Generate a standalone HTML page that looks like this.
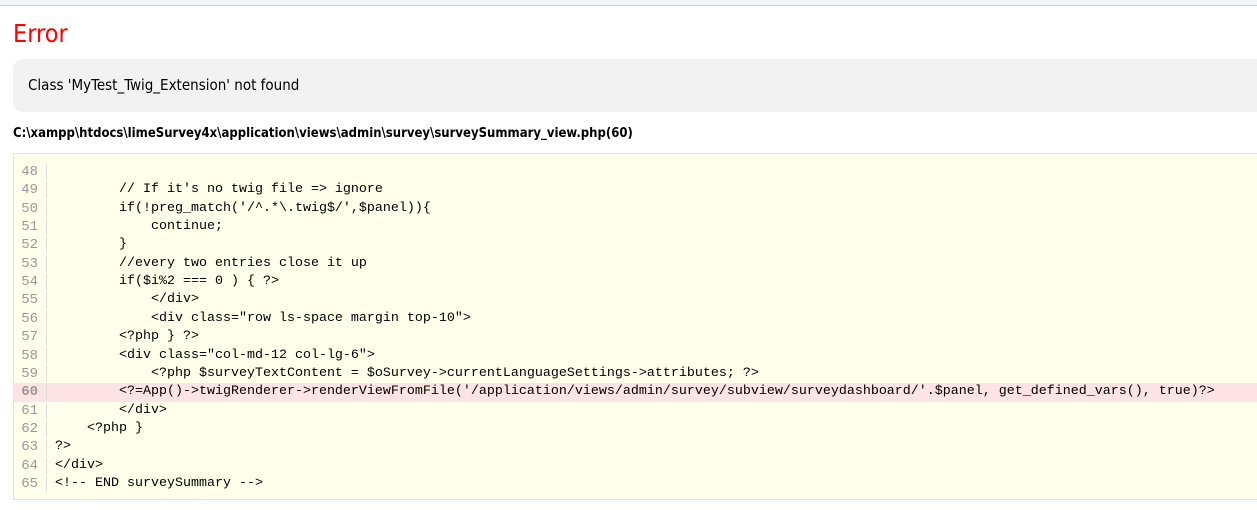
<!DOCTYPE html>
<html><head><meta charset="utf-8"><style>
html,body{margin:0;padding:0;background:#fff;width:1257px;height:510px;overflow:hidden;font-family:"DejaVu Sans","Liberation Sans",sans-serif;}
.top{position:absolute;left:0;top:0;width:1257px;height:5px;background:#f3f4f6;border-bottom:1px solid #ccc;}
h1{position:absolute;left:13px;top:19px;margin:0;font-weight:normal;color:#f00;font-size:25px;line-height:30px;font-family:"DejaVu Sans Condensed","DejaVu Sans",sans-serif;}
.msg{position:absolute;left:13px;top:59px;width:1260px;height:53px;background:#f2f2f2;border-radius:10px;}
.msg span{position:absolute;left:15px;top:17px;font-size:15px;color:#000;font-family:"DejaVu Sans Condensed","DejaVu Sans",sans-serif;}
.path{position:absolute;left:13px;top:126px;font-size:13px;font-weight:bold;color:#000;font-family:"DejaVu Sans Condensed","DejaVu Sans",sans-serif;}
.code{position:absolute;left:13px;top:153px;width:1260px;height:345px;background:#ffffec;border:1px solid #e4e4e4;}
.ln{position:absolute;left:0;height:18.35px;width:1260px;font-family:"Liberation Mono",monospace;font-size:13.33px;line-height:18.35px;white-space:pre;color:#000;}
.ln .n{position:absolute;left:0;width:24px;text-align:right;color:#999;font-size:14px;}
.ln .s{position:absolute;left:32px;top:1px;height:16px;border-left:1px solid #ddd;}
.ln .t{position:absolute;left:41px;}
.hl{background:#fde3e3;}
.hl .n{font-weight:bold;}
</style></head><body>
<div class="top"></div>
<h1>Error</h1>
<div class="msg"><span>Class 'MyTest_Twig_Extension' not found</span></div>
<div class="path">C:\xampp\htdocs\limeSurvey4x\application\views\admin\survey\surveySummary_view.php(60)</div>
<div class="code">
<div class="ln" style="top:9px"><span class="n">48</span><span class="s"></span><span class="t"></span></div>
<div class="ln" style="top:27.35px"><span class="n">49</span><span class="s"></span><span class="t">        // If it's no twig file =&gt; ignore</span></div>
<div class="ln" style="top:45.7px"><span class="n">50</span><span class="s"></span><span class="t">        if(!preg_match('/^.*\.twig$/',$panel)){</span></div>
<div class="ln" style="top:64.05px"><span class="n">51</span><span class="s"></span><span class="t">            continue;</span></div>
<div class="ln" style="top:82.4px"><span class="n">52</span><span class="s"></span><span class="t">        }</span></div>
<div class="ln" style="top:100.75px"><span class="n">53</span><span class="s"></span><span class="t">        //every two entries close it up</span></div>
<div class="ln" style="top:119.1px"><span class="n">54</span><span class="s"></span><span class="t">        if($i%2 === 0 ) { ?&gt;</span></div>
<div class="ln" style="top:137.45px"><span class="n">55</span><span class="s"></span><span class="t">            &lt;/div&gt;</span></div>
<div class="ln" style="top:155.8px"><span class="n">56</span><span class="s"></span><span class="t">            &lt;div class="row ls-space margin top-10"&gt;</span></div>
<div class="ln" style="top:174.15px"><span class="n">57</span><span class="s"></span><span class="t">        &lt;?php } ?&gt;</span></div>
<div class="ln" style="top:192.5px"><span class="n">58</span><span class="s"></span><span class="t">        &lt;div class="col-md-12 col-lg-6"&gt;</span></div>
<div class="ln" style="top:210.85px"><span class="n">59</span><span class="s"></span><span class="t">            &lt;?php $surveyTextContent = $oSurvey-&gt;currentLanguageSettings-&gt;attributes; ?&gt;</span></div>
<div class="ln hl" style="top:229.2px"><span class="n">60</span><span class="s"></span><span class="t">        &lt;?=App()-&gt;twigRenderer-&gt;renderViewFromFile('/application/views/admin/survey/subview/surveydashboard/'.$panel, get_defined_vars(), true)?&gt;</span></div>
<div class="ln" style="top:247.55px"><span class="n">61</span><span class="s"></span><span class="t">        &lt;/div&gt;</span></div>
<div class="ln" style="top:265.9px"><span class="n">62</span><span class="s"></span><span class="t">    &lt;?php }</span></div>
<div class="ln" style="top:284.25px"><span class="n">63</span><span class="s"></span><span class="t">?&gt;</span></div>
<div class="ln" style="top:302.6px"><span class="n">64</span><span class="s"></span><span class="t">&lt;/div&gt;</span></div>
<div class="ln" style="top:320.95px"><span class="n">65</span><span class="s"></span><span class="t">&lt;!-- END surveySummary --&gt;</span></div>
</div>
</body></html>
